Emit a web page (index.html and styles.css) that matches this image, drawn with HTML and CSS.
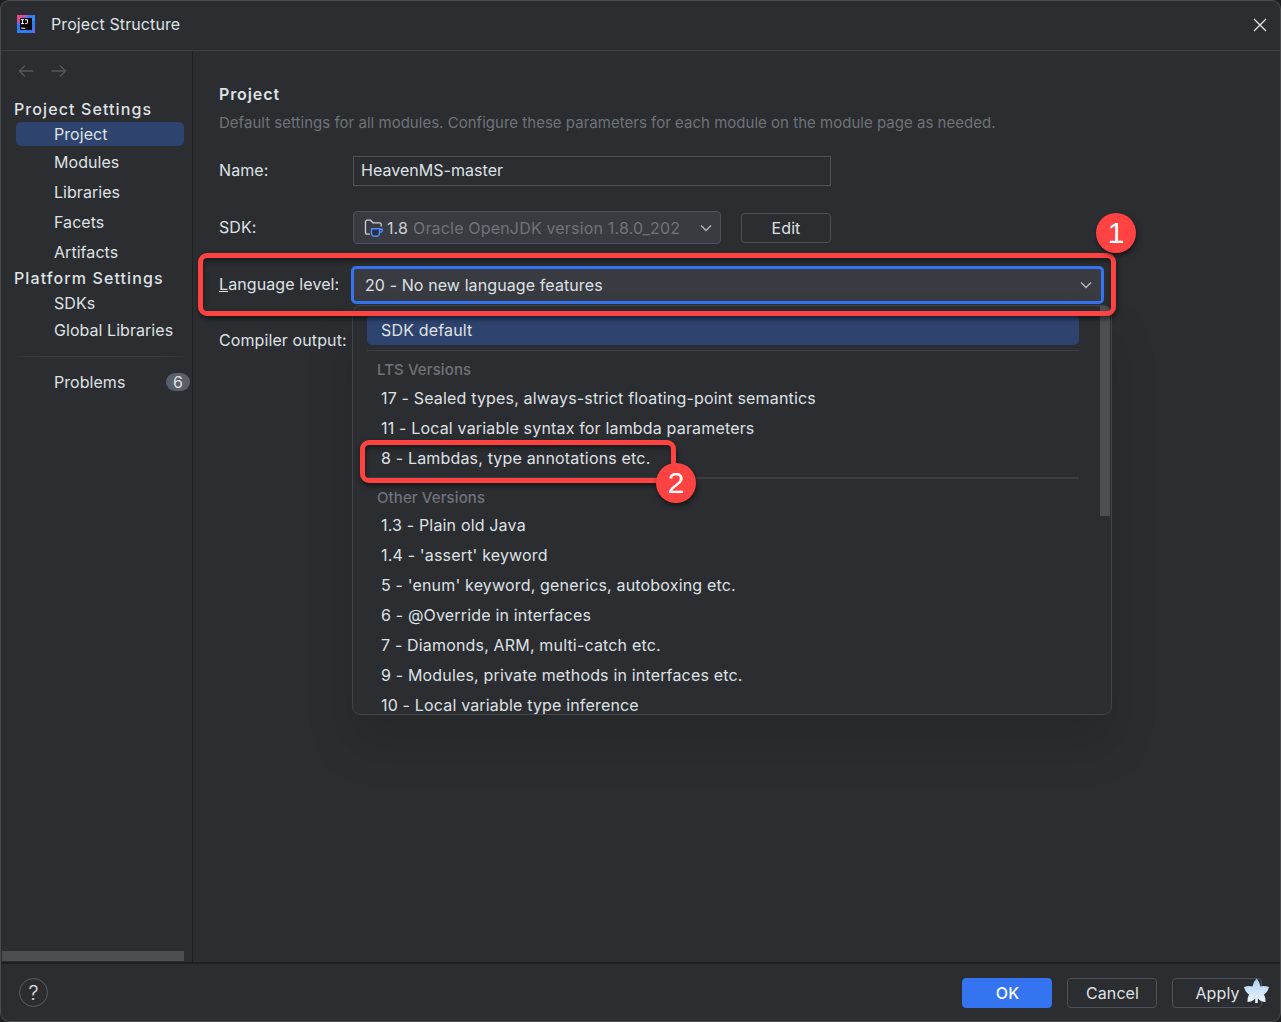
FILE: index.html
```html
<!DOCTYPE html>
<html lang="en">
<head>
  <meta charset="UTF-8" />
  <meta name="viewport" content="width=device-width, initial-scale=1.0" />
  <title>Project Structure</title>
  <link rel="stylesheet" href="styles.css">
</head>
<body>
  <div class="window">
    <div class="titlebar">
      <svg class="logo" width="18" height="18" viewBox="0 0 18 18">
        <defs>
          <linearGradient id="lg" x1="0" y1="0" x2="1" y2="0.6">
            <stop offset="0" stop-color="#fe4a57" />
            <stop offset="0.35" stop-color="#d04ab0" />
            <stop offset="0.6" stop-color="#2d7cfa" />
            <stop offset="1" stop-color="#2d9cff" />
          </linearGradient>
        </defs>
        <rect width="18" height="18" fill="#2a7df5" />
        <path d="M0 9V0H18V5L9 9Z" fill="url(#lg)" />
        <path d="M15 18H18V12L15 14Z" fill="#5f6cf0" />
        <rect x="3" y="3" width="12" height="12" fill="#0a0008" />
        <path d="M4 4.7H7M5.5 4.7V8.6M4 8.6H7M8 4.7H10.5V7.4Q10.5 8.600 9.400 8.600H8M4.200 13.200H8.200" stroke="#fff" stroke-width="1" fill="none" />
      </svg>
      <span class="title">Project Structure</span>
      <svg class="close" width="14" height="14" viewBox="0 0 14 14"><path d="M1 1L13 13M13 1L1 13" stroke="#e4e5e8" stroke-width="1.3" /></svg>
    </div>

    <div class="content">
      <div class="sidebar">
        <div class="history">
          <svg width="16" height="14" viewBox="0 0 16 14"><path d="M15.5 7H1.5M7 1.5L1.5 7L7 12.5" /></svg>
          <svg width="16" height="14" viewBox="0 0 16 14"><path d="M0.5 7H14.5M9 1.5L14.5 7L9 12.5" /></svg>
        </div>
        <h3>Project Settings</h3>
        <a class="active">Project</a>
        <a>Modules</a>
        <a>Libraries</a>
        <a>Facets</a>
        <a>Artifacts</a>
        <h3 class="platform">Platform Settings</h3>
        <a class="sdks">SDKs</a>
        <a class="global">Global Libraries</a>
        <div class="divider"></div>
        <a class="problems">Problems <span class="count">6</span></a>
        <div class="hscroll"></div>
      </div>

      <div class="main">
        <h2>Project</h2>
        <p class="hint">Default settings for all modules. Configure these parameters for each module on the module page as needed.</p>

        <div class="row name-row">
          <label>Name:</label>
          <div class="field">HeavenMS-master</div>
        </div>

        <div class="row sdk-row">
          <label>SDK:</label>
          <div class="combo sdk">
            <svg class="folder" width="20" height="19" viewBox="0 0 20 19">
              <path d="M6 15.2H3.2Q1.5 15.2 1.5 13.5V2.8Q1.5 1.2 3.2 1.2H6.5L9 3.8H15.5Q17.2 3.8 17.2 5.4V7.5" fill="none" stroke="#ced0d6" stroke-width="1.3" />
              <path d="M7.5 9.7H15.5V13.5Q15.5 17.2 12.8 17.2H10.2Q7.5 17.2 7.5 13.5ZM15.5 10.2H18.4V11.5Q18.4 13.2 15.5 13.2" fill="#25324d" stroke="#548af7" stroke-width="1.4" />
            </svg>
            <span class="ver">1.8</span>
            <span class="dim">Oracle OpenJDK version 1.8.0_202</span>
            <svg class="chevron" width="12" height="8" viewBox="0 0 12 8"><path d="M1 1.5L6 6.5L11 1.5" /></svg>
          </div>
          <button class="btn edit">Edit</button>
        </div>

        <div class="row level-row">
          <label><u>L</u>anguage level:</label>
          <div class="combo level">
            <span>20 - No new language features</span>
            <svg class="chevron" width="12" height="8" viewBox="0 0 12 8"><path d="M1 1.5L6 6.5L11 1.5" /></svg>

            <div class="popup">
              <div class="list">
                <div class="item selected">SDK default</div>
                <div class="line"></div>
                <div class="group lts">LTS Versions</div>
                <div class="item">17 - Sealed types, always-strict floating-point semantics</div>
                <div class="item">11 - Local variable syntax for lambda parameters</div>
                <div class="item">8 - Lambdas, type annotations etc.</div>
                <div class="line thick"></div>
                <div class="group">Other Versions</div>
                <div class="item">1.3 - Plain old Java</div>
                <div class="item">1.4 - 'assert' keyword</div>
                <div class="item">5 - 'enum' keyword, generics, autoboxing etc.</div>
                <div class="item">6 - @Override in interfaces</div>
                <div class="item">7 - Diamonds, ARM, multi-catch etc.</div>
                <div class="item">9 - Modules, private methods in interfaces etc.</div>
                <div class="item last">10 - Local variable type inference</div>
              </div>
              <div class="vscroll"></div>
            </div>
          </div>
        </div>

        <div class="row output-row">
          <label>Compiler output:</label>
        </div>
      </div>
    </div>

    <div class="footer">
      <div class="help">?</div>
      <button class="btn primary">OK</button>
      <button class="btn">Cancel</button>
      <button class="btn apply">Apply</button>
    </div>
  </div>

  <!-- step markers -->
  <div class="mark mark-1"><span class="step">1</span></div>
  <div class="mark mark-2"><span class="step">2</span></div>
  <svg class="leaf" width="26" height="26" viewBox="0 0 26 26">
    <defs>
      <linearGradient id="leafFill" x1="0" y1="0" x2="0" y2="1">
        <stop offset="0" stop-color="#a9cdf5" />
        <stop offset="1" stop-color="#f2f8ff" />
      </linearGradient>
    </defs>
    <path d="M12.500 0.500Q16 4 16.500 8.500Q20 7.500 25 9Q24 13.500 20 16.500Q22 20 21.500 24Q17 24 13.800 20.500V25H11.200V20.500Q8 24 3.500 24Q3 20 5 16.500Q1 13.500 0 9Q5 7.500 8.500 8.500Q9 4 12.500 0.500Z" fill="url(#leafFill)" />
  </svg>
</body>
</html>
```

FILE: styles.css
```css
* {
  margin: 0;
  padding: 0;
  box-sizing: border-box;
}
body {
  width: 1281px;
  height: 1022px;
  overflow: hidden;
  position: relative;
  background: #1e1f22;
  color: #dfe1e5;
  font-family: Inter, "Liberation Sans", sans-serif;
  font-size: 16px;
  letter-spacing: 0.1px;
  line-height: 20px;
  white-space: nowrap;
}
.window {
  height: 1022px;
  display: flex;
  flex-direction: column;
  background: #2b2d30;
  border: 1px solid #4b4c4f;
  border-radius: 9px;
  overflow: hidden;
}
.titlebar {
  height: 50px;
  display: flex;
  align-items: center;
  padding: 0 13px 3px 16px;
  border-bottom: 1px solid #3c3e41;
}
.title {
  margin-left: 16px;
}
.close {
  margin-left: auto;
  margin-top: 1px;
}

.content {
  height: 911px;
  display: flex;
}
.sidebar {
  width: 192px;
  display: flex;
  flex-direction: column;
  border-right: 1px solid #1e1f22;
}
.history {
  height: 46px;
  display: flex;
  gap: 17px;
  padding: 13px 0 0 17px;
}
.history path {
  fill: none;
  stroke: #55575b;
  stroke-width: 1.4;
}
.sidebar h3 {
  height: 25px;
  padding-left: 13px;
  font-size: 16px;
  font-weight: 500;
  letter-spacing: 1.1px;
  line-height: 24px;
}
.sidebar a {
  height: 30px;
  padding-left: 53px;
  letter-spacing: 0.05px;
  line-height: 30px;
}
.sidebar a.active {
  height: 24px;
  margin: 0 8px 1px 15px;
  padding-left: 38px;
  line-height: 24px;
  background: #2e436e;
  border-radius: 5px;
}
.sidebar h3.platform {
  height: 23px;
  line-height: 22px;
}
.sidebar a.sdks {
  height: 26px;
  line-height: 26px;
}
.sidebar a.global {
  height: 29px;
  line-height: 28px;
}
.divider {
  height: 1px;
  margin: 11px 4px 10px 12px;
  background: linear-gradient(to right, #2b2d30, #3c3e41 15%, #3c3e41 85%, #2b2d30);
}
.sidebar a.problems {
  display: flex;
  align-items: center;
  justify-content: space-between;
  padding-right: 2px;
}
.count {
  width: 24px;
  height: 18px;
  border-radius: 9px;
  background: #5a5f6b;
  line-height: 19px;
  text-align: center;
}
.hscroll {
  width: 182px;
  height: 10px;
  margin: auto 0 1px 1px;
  background: #4d4e51;
}

.main {
  flex: 1;
  padding: 33px 0 0 26px;
}
.main h2 {
  font-size: 16px;
  font-weight: 600;
  letter-spacing: 0.9px;
  line-height: 20px;
}
.hint {
  margin-top: 9px;
  color: #6f737a;
  font-size: 15px;
  letter-spacing: 0.02px;
}
.row {
  display: flex;
  align-items: center;
}
.row label {
  width: 134px;
  padding-bottom: 2px;
}
.name-row {
  height: 30px;
  margin-top: 23px;
}
.field {
  width: 478px;
  height: 30px;
  padding-left: 7px;
  border: 1px solid #4e5157;
  letter-spacing: 0.04px;
  line-height: 27px;
}
.sdk-row {
  height: 33px;
  margin-top: 25px;
}
.combo {
  display: flex;
  align-items: center;
  background: #393b40;
  border: 1px solid #4e5157;
  border-radius: 4px;
}
.sdk {
  width: 368px;
  height: 33px;
  padding: 1px 8px 0 10px;
}
.ver {
  margin: 0 5px 0 3px;
  color: #ced0d6;
}
.dim {
  color: #6f737a;
  letter-spacing: 0.18px;
}
.chevron {
  margin-left: auto;
}
.chevron path {
  fill: none;
  stroke: #b4b8bf;
  stroke-width: 1.4;
}
.btn {
  width: 90px;
  height: 30px;
  background: #2b2d30;
  border: 1px solid #4e5157;
  border-radius: 4px;
  color: #dfe1e5;
  font: inherit;
  letter-spacing: inherit;
}
.edit {
  margin-left: 20px;
}
.level-row {
  height: 38px;
  margin-top: 22px;
}
.row .level {
  position: relative;
  width: 753px;
  height: 38px;
  margin-left: -2px;
  padding: 0 9px 0 11px;
  border: 3px solid #3574f0;
  border-radius: 5px;
}
.output-row {
  height: 20px;
  margin-top: 27px;
}

.popup {
  position: absolute;
  left: -2px;
  top: 36px;
  width: 760px;
  height: 410px;
  display: flex;
  justify-content: space-between;
  overflow: hidden;
  background: #2b2d30;
  border: 1px solid #43454a;
  border-radius: 9px;
  box-shadow: 0 30px 50px rgba(0, 0, 0, 0.12);
  letter-spacing: 0.17px;
}
.list {
  width: 712px;
  margin: 9px 0 0 14px;
}
.item {
  height: 30px;
  padding-left: 14px;
  line-height: 30px;
}
.item.selected {
  background: #2e436e;
  border-radius: 5px;
}
.item.last {
  height: 24px;
}
.line {
  height: 1px;
  margin: 5px 0;
  background: #3c3e41;
}
.line.thick {
  height: 2px;
  margin: 4px 0 6px;
}
.group {
  height: 25px;
  padding-left: 10px;
  color: #6f737a;
  font-size: 15px;
  font-weight: 500;
  letter-spacing: 0.1px;
  line-height: 26px;
}
.group.lts {
  height: 27px;
  line-height: 28px;
}
.vscroll {
  width: 10px;
  height: 210px;
  margin-right: 1px;
  background: #4d4e51;
}

.footer {
  height: 59px;
  display: flex;
  align-items: center;
  padding: 0 18px;
  border-top: 2px solid #1e1f22;
}
.help {
  width: 29px;
  height: 29px;
  margin-right: auto;
  border: 1px solid #5a5d63;
  border-radius: 50%;
  font-size: 20px;
  font-weight: 300;
  line-height: 28px;
  text-align: center;
}
.footer .btn {
  margin-left: 15px;
  padding-left: 1px;
}
.footer .primary {
  background: #3574f0;
  border-color: #3574f0;
  color: #fff;
  font-weight: 500;
}

.mark {
  position: absolute;
  border: 5px solid #ff4242;
  border-radius: 9px;
  box-shadow: 1px 3px 5px rgba(0, 0, 0, 0.5), inset 1px 3px 5px rgba(0, 0, 0, 0.4);
}
.mark-1 {
  left: 198px;
  top: 253px;
  width: 918px;
  height: 63px;
}
.mark-2 {
  left: 360px;
  top: 440px;
  width: 316px;
  height: 43px;
}
.step {
  position: absolute;
  width: 40px;
  height: 40px;
  border-radius: 50%;
  background: #ff4242;
  box-shadow: 1px 3px 5px rgba(0, 0, 0, 0.5);
  color: #fff;
  font-family: "Liberation Sans", sans-serif;
  font-size: 30px;
  letter-spacing: 0;
  line-height: 40px;
  text-align: center;
}
.mark-1 .step {
  right: -25px;
  top: -45px;
}
.mark-2 .step {
  right: -25px;
  top: 18px;
}
.leaf {
  position: absolute;
  left: 1244px;
  top: 978px;
}
```
